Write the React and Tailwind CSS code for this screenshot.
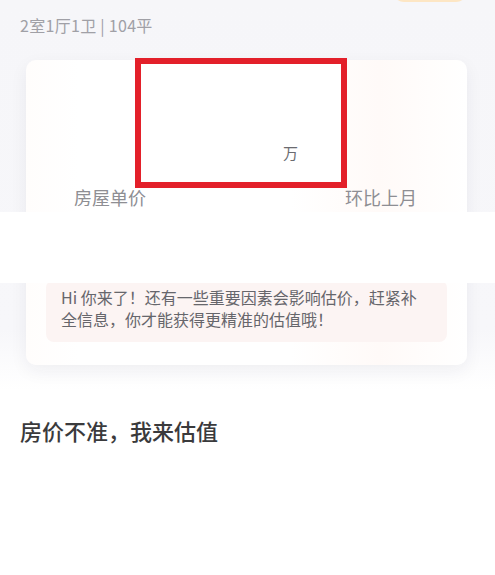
import React from "react";

export default function App() {
  return (
    <div
      className="relative w-[495px] h-[575px] overflow-hidden bg-[linear-gradient(180deg,#f6f6f9_0px,#f7f7fa_330px,#ffffff_390px)]"
      style={{ fontFamily: '"Noto Sans CJK SC", "Noto Sans", sans-serif' }}
    >
      {/* top badge peeking */}
      <div className="absolute left-[393px] top-[-20px] w-[74px] h-[22px] rounded-full bg-[#fde6c4]" />

      <div className="pl-[20px] pt-[14px] text-[16px] leading-[22px] text-[#a0a0a6] tracking-[0.3px]">
        2室1厅1卫 | 104平
      </div>

      {/* card */}
      <div className="mt-[24px] ml-[26px] w-[441px] h-[305px] rounded-[10px] bg-[linear-gradient(90deg,#fffdfc_0%,#ffffff_12%,#ffffff_60%,#fffaf8_80%,#ffffff_100%)] shadow-[0_6px_18px_rgba(30,30,60,0.06)] flex flex-col">
        <div className="pt-[124px] pl-[48px] pr-[50px] flex justify-between text-[18px] leading-[26px] text-[#8e8e93]">
          <span>房屋单价</span>
          <span>环比上月</span>
        </div>

        <div className="mt-[70px] mx-[20px] rounded-[8px] bg-[#fcf4f3] px-[15px] pt-[6px] pb-[12px] text-[16px] leading-[22px] text-[#66666b]">
          Hi 你来了！还有一些重要因素会影响估价，赶紧补全信息，你才能获得更精准的估值哦！
        </div>
      </div>

      <div className="mt-[50px] pl-[20px] text-[22px] leading-[30px] font-medium text-[#3a3a3c]">
        房价不准，我来估值
      </div>

      {/* white band overlay */}
      <div className="absolute left-0 top-[212px] w-[495px] h-[71px] bg-white" />

      {/* red annotation box */}
      <div className="absolute left-[135px] top-[58px] w-[212px] h-[130px] border-[6px] border-[#e3202a] bg-white flex items-end justify-end pr-[43px] pb-[19px]">
        <span className="text-[15px] leading-[20px] text-[#6b6b70]">万</span>
      </div>
    </div>
  );
}
